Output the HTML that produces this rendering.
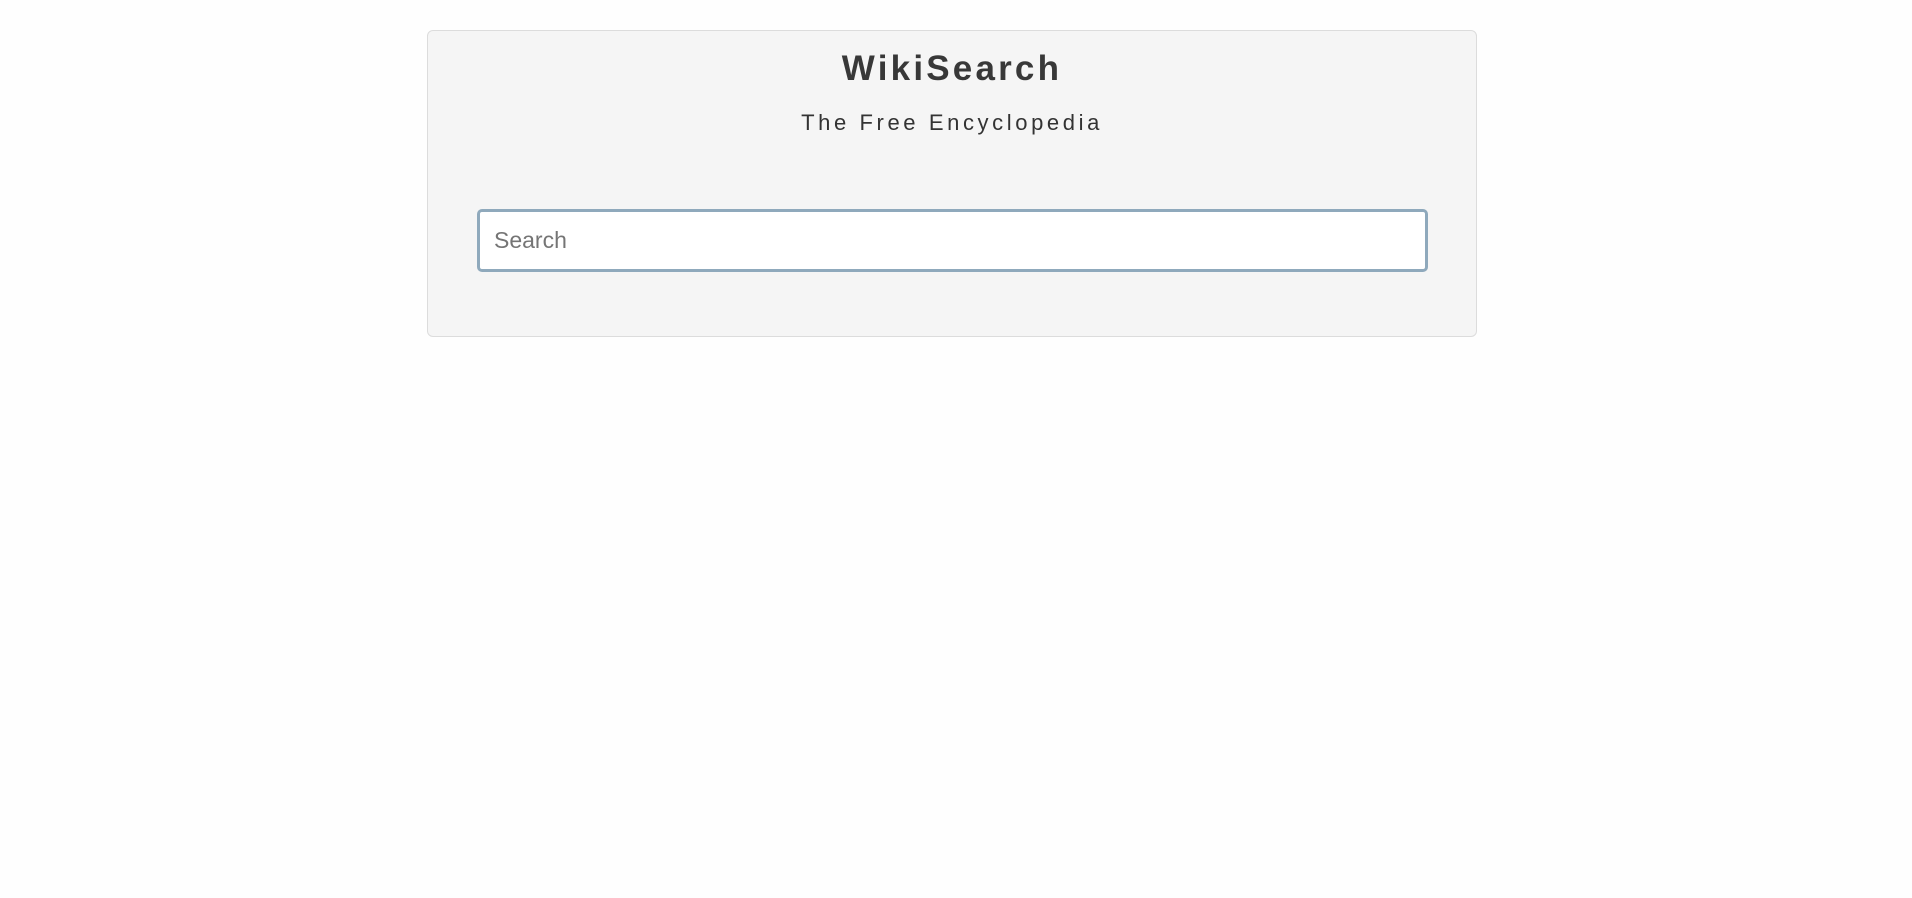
<!DOCTYPE html>
<html><head><meta charset="utf-8"><style>
html,body{margin:0;padding:0;background:#fefefe;width:1912px;height:898px;overflow:hidden;font-family:"Liberation Sans",Arial,sans-serif;}
.box{position:absolute;left:427px;top:30px;width:1048px;height:305px;background:#f5f5f5;border:1px solid #dcdcdc;border-radius:6px;}
h1{position:absolute;left:427px;width:1050px;top:51px;margin:0;text-align:center;font-size:35px;font-weight:bold;letter-spacing:3.2px;color:#383838;line-height:1;}
.sub{position:absolute;left:427px;width:1050px;top:112px;text-align:center;font-size:22px;letter-spacing:3.6px;color:#333;line-height:1;}
.inp{position:absolute;left:477px;top:209px;width:945px;height:57px;background:#fff;border:3px solid #8fa9bc;border-radius:5px;}
.inp span{position:absolute;left:14px;top:17px;font-size:23px;color:#757575;line-height:1;}
</style></head><body>
<div class="box"></div>
<h1>WikiSearch</h1>
<div class="sub">The Free Encyclopedia</div>
<div class="inp"><span>Search</span></div>
</body></html>
